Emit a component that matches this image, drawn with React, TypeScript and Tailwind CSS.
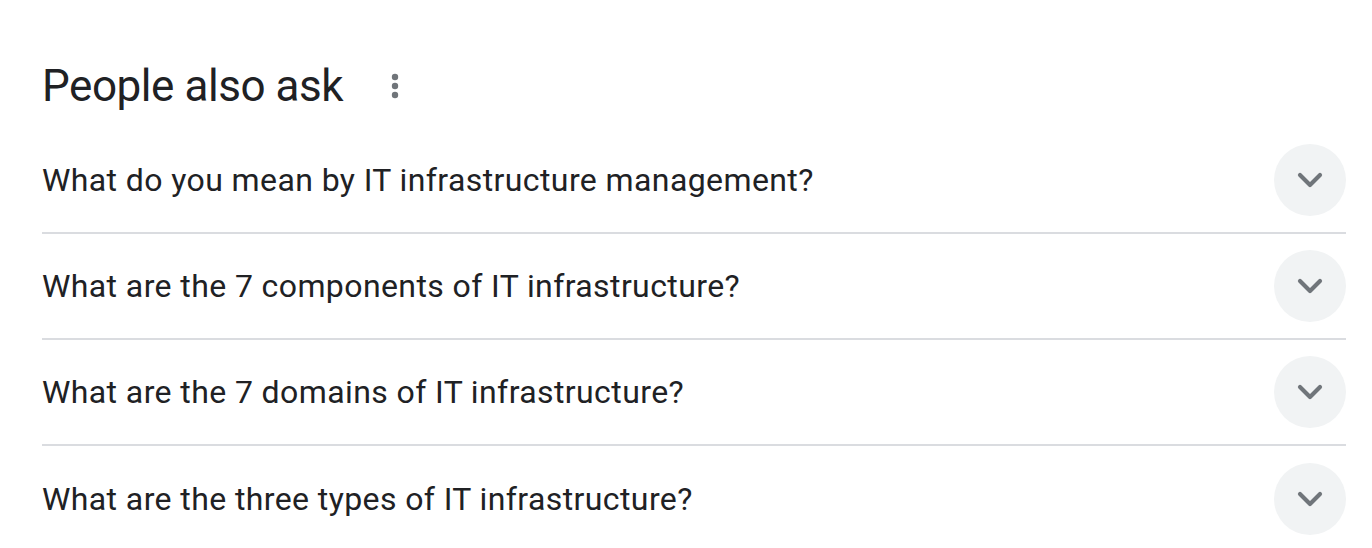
import { ChevronDown } from "lucide-react";

const questions = [
  "What do you mean by IT infrastructure management?",
  "What are the 7 components of IT infrastructure?",
  "What are the 7 domains of IT infrastructure?",
  "What are the three types of IT infrastructure?",
];

function MoreDots() {
  return (
    <svg width="10" height="26" viewBox="0 0 10 26" className="text-[#70757a]">
      <circle cx="5" cy="4" r="3.2" fill="currentColor" />
      <circle cx="5" cy="13" r="3.2" fill="currentColor" />
      <circle cx="5" cy="22" r="3.2" fill="currentColor" />
    </svg>
  );
}

export default function App() {
  return (
    <div className="w-[1372px] h-[548px] bg-white overflow-hidden font-['Roboto',sans-serif] text-[#202124]">
      <div className="pl-[42px] pr-[26px] pt-[58px]">
        {/* Heading */}
        <div className="flex items-center h-[56px]">
          <h2 className="text-[44px] leading-[56px] tracking-[-0.45px] font-normal">People also ask</h2>
          <button type="button" className="ml-[46px] flex items-center justify-center w-[12px] h-[40px]">
            <MoreDots />
          </button>
        </div>

        {/* Questions */}
        <div className="mt-[14px]">
          {questions.map((q, i) => (
            <div
              key={q}
              className={
                i < questions.length - 1
                  ? "flex items-center justify-between h-[106px] border-b-2 border-[#dadce0]"
                  : "flex items-center justify-between h-[106px]"
              }
            >
              <span className="text-[32px] leading-[40px] tracking-[0.4px]">{q}</span>
              <span className="flex items-center justify-center w-[72px] h-[72px] rounded-full bg-[#f1f3f4] text-[#70757a]">
                <ChevronDown size={40} strokeWidth={2.5} />
              </span>
            </div>
          ))}
        </div>
      </div>
    </div>
  );
}
